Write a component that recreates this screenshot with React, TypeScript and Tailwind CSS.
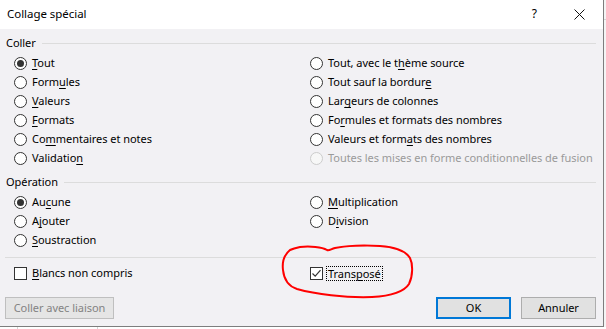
import React from "react";

const font = { fontFamily: '"Noto Sans", "Open Sans", sans-serif' };

function Label({ pre = "", k = "", post = "", disabled = false }: { pre?: string; k?: string; post?: string; disabled?: boolean }) {
  return (
    <span className={disabled ? "text-[#9a9a9a] whitespace-nowrap" : "text-black whitespace-nowrap"}>
      {pre}
      <span className="underline underline-offset-[2px] decoration-1">{k}</span>
      {post}
    </span>
  );
}

function Radio({ checked = false, disabled = false, pre = "", k = "", post = "" }: { checked?: boolean; disabled?: boolean; pre?: string; k?: string; post?: string }) {
  return (
    <div className="flex items-center h-[19px] gap-[5px]">
      <span
        className={
          disabled
            ? "w-[13px] h-[13px] shrink-0 rounded-full border border-[#cccccc] bg-[#f7f7f7] flex items-center justify-center"
            : "w-[13px] h-[13px] shrink-0 rounded-full border border-[#333333] bg-white flex items-center justify-center"
        }
      >
        {checked && <span className="w-[7px] h-[7px] rounded-full bg-[#333333]" />}
      </span>
      <Label pre={pre} k={k} post={post} disabled={disabled} />
    </div>
  );
}

function Legend({ text }: { text: string }) {
  return (
    <div className="flex items-center h-[16px] gap-[6px] pl-[1px]">
      <span className="text-black leading-[16px]">{text}</span>
      <div className="flex-1 h-px bg-[#dcdcdc]" />
    </div>
  );
}

function CheckBox({ checked = false }: { checked?: boolean }) {
  return (
    <span className="w-[13px] h-[13px] shrink-0 border border-[#333333] bg-white flex items-center justify-center">
      {checked && (
        <svg width="11" height="11" viewBox="0 0 11 11">
          <path d="M1.5 5.5 L4.2 8.2 L9.5 2.2" fill="none" stroke="#333333" strokeWidth="1.2" />
        </svg>
      )}
    </span>
  );
}

export default function App() {
  return (
    <div className="relative w-[606px] h-[329px] overflow-hidden bg-white text-[11px] tracking-[-0.04px]" style={font}>
      <div className="flex">
        <div className="w-[604px] h-[327px] flex flex-col border-r border-b border-[#7d7d7d]">
          {/* title bar */}
          <div className="h-[29px] bg-white flex items-center pl-[7px] pr-[18px] shrink-0">
            <span className="text-black text-[11.5px] leading-[16px] mt-[-2px]">Collage spécial</span>
            <div className="flex-1" />
            <span className="text-black text-[12px] mr-[37px] mt-[-2px]">?</span>
            <svg width="11" height="11" viewBox="0 0 11 11" className="mt-[-1px]">
              <path d="M0.5 0.5 L10.5 10.5 M10.5 0.5 L0.5 10.5" stroke="#111" strokeWidth="1" />
            </svg>
          </div>
          {/* body */}
          <div className="flex-1 bg-[#f2f1f4] pl-[5px] pr-[7px] pt-[6px] flex flex-col">
            <Legend text="Coller" />
            <div className="grid grid-cols-[296px_1fr] pl-[9px] mt-[3px]">
              <Radio checked k="T" post="out" />
              <Radio pre="Tout, avec le t" k="h" post="ème source" />
              <Radio pre="Form" k="u" post="les" />
              <Radio pre="Tout sauf la bordur" k="e" />
              <Radio k="V" post="aleurs" />
              <Radio pre="Lar" k="g" post="eurs de colonnes" />
              <Radio k="F" post="ormats" />
              <Radio pre="Fo" k="r" post="mules et formats des nombres" />
              <Radio pre="Co" k="m" post="mentaires et notes" />
              <Radio pre="Valeurs et form" k="a" post="ts des nombres" />
              <Radio pre="Validatio" k="n" />
              <Radio disabled pre="Toutes les mises en forme conditionnelles de fusion" />
            </div>
            <div className="mt-[6px]">
              <Legend text="Opération" />
            </div>
            <div className="grid grid-cols-[296px_1fr] pl-[9px] mt-[3px]">
              <Radio checked pre="Au" k="c" post="une" />
              <Radio k="M" post="ultiplication" />
              <Radio pre="A" k="j" post="outer" />
              <Radio pre="D" k="i" post="vision" />
              <Radio k="S" post="oustraction" />
              <div />
            </div>
            <div className="h-px bg-[#dcdcdc] mt-[7px]" />
            <div className="grid grid-cols-[296px_1fr] pl-[9px] mt-[6px]">
              <div className="flex items-center h-[19px] gap-[5px]">
                <CheckBox />
                <Label k="B" post="lancs non compris" />
              </div>
              <div className="flex items-center h-[19px] gap-[3px]">
                <CheckBox checked />
                <span className="border border-dotted border-black px-[1px] leading-[13px]">
                  <Label pre="Trans" k="p" post="osé" />
                </span>
              </div>
            </div>
            <div className="flex items-center mt-[14px]">
              <div className="w-[109px] h-[22px] bg-[#e5e5e5] border border-[#bfbfbf] flex items-center justify-center text-[#838383]">
                Coller avec liaison
              </div>
              <div className="flex-1" />
              <div className="w-[75px] h-[22px] bg-[#e1e1e1] border-2 border-[#0078d7] flex items-center justify-center text-black">
                OK
              </div>
              <div className="w-[75px] h-[22px] ml-[10px] bg-[#e1e1e1] border border-[#adadad] flex items-center justify-center text-black">
                Annuler
              </div>
            </div>
          </div>
        </div>
        <div className="flex-1 h-[327px] bg-[#f4f4f4] flex flex-col">
          <div className="h-[20px] border-b border-[#d4d4d4]" />
        </div>
      </div>
      <div className="flex h-[2px]">
        <div className="w-[18px] border-r border-[#d4d4d4]" />
        <div className="w-[80px] border-r border-[#d4d4d4]" />
      </div>
      <svg className="absolute left-0 top-0 pointer-events-none" width="606" height="329" viewBox="0 0 606 329">
        <path
          d="M 290 250 C 284 255, 282 262, 283 270 C 284 280, 288 286, 297 289 C 315 294, 345 298, 372 297 C 390 296, 404 292, 409 284 C 413 276, 413 264, 410 258 C 405 250, 395 247, 380 246 C 365 245, 345 246, 335 248 C 331 249, 329 251, 327 250 C 322 247, 310 246, 300 247 C 295 248, 292 249, 290 250 Z"
          fill="none"
          stroke="#ff0000"
          strokeWidth="2"
        />
      </svg>
    </div>
  );
}
